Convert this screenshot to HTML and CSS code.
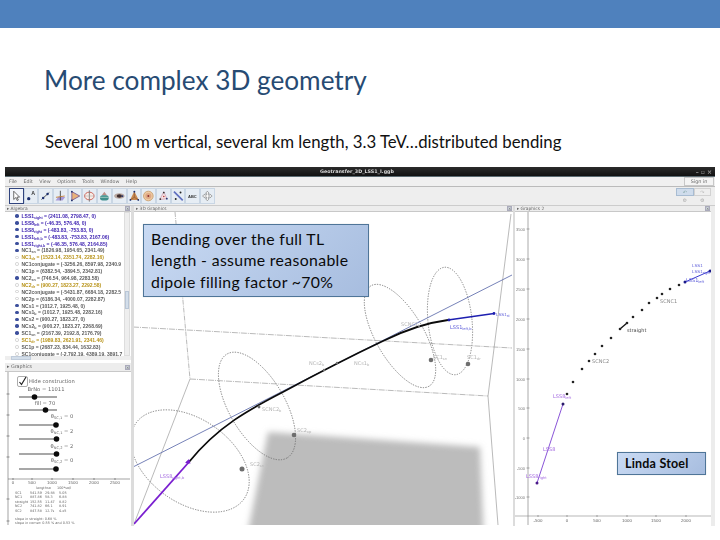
FILE: index.html
```html
<!DOCTYPE html>
<html lang="en">
<head>
<meta charset="utf-8">
<title>More complex 3D geometry</title>
<link rel="stylesheet" href="styles.css">
</head>
<body>
<div class="slide">
  <div class="band"></div>
  <h1 class="title">More complex 3D geometry</h1>
  <p class="lead">Several 100 m vertical, several km length, 3.3 TeV…distributed bending</p>

  <div class="app">
    <div class="titlebar"><span class="wintitle">Geotransfer_3D_LSS1_I.ggb</span><span class="winctl">– ▫ ×</span></div>
    <div class="menubar">
      <span>File</span><span>Edit</span><span>View</span><span>Options</span><span>Tools</span><span>Window</span><span>Help</span>
      <span class="signin">Sign in</span>
    </div>
    <div class="toolbar">
      <div class="tool tool-on"><svg viewBox="0 0 14 16"><path d="M4 2.5v9.5l2.4-2.2 1.6 3.4 1.3-.6-1.6-3.3h3z" fill="#fff" stroke="#333" stroke-width=".8"/></svg></div>
      <div class="tool"><svg viewBox="0 0 14 16"><circle cx="4" cy="11" r="1.9" fill="#1c2f6e"/><text x="7" y="7" class="ticon">A</text></svg></div>
      <div class="tool"><svg viewBox="0 0 14 16"><path d="M2.5 12L11.5 4" stroke="#444" stroke-width="1"/><circle cx="4.5" cy="10.2" r="1.4" fill="#1c2f6e"/><circle cx="9.5" cy="5.8" r="1.4" fill="#1c2f6e"/></svg></div>
      <div class="tool"><svg viewBox="0 0 14 16"><path d="M1.5 13l3-4h8l-3 4z" fill="#a79ad8"/><path d="M7 2v11" stroke="#444" stroke-width="1"/><path d="M2 9.5l10-1.5" stroke="#c07a30"/></svg></div>
      <div class="tool"><svg viewBox="0 0 14 16"><path d="M3 3l9 5-9 5z" fill="#eab27a" stroke="#7a5a90" stroke-width="1"/><circle cx="3" cy="3" r="1" fill="#1c2f6e"/><circle cx="3" cy="13" r="1" fill="#1c2f6e"/></svg></div>
      <div class="tool"><svg viewBox="0 0 14 16"><ellipse cx="7" cy="8" rx="5.4" ry="4.4" fill="#f7ece6" stroke="#c9574a"/><path d="M7 1.5v13" stroke="#777"/><path d="M1.5 8h11" stroke="#aaa" stroke-width=".6"/></svg></div>
      <div class="tool"><svg viewBox="0 0 14 16"><path d="M4 7l3-4 3 4z" fill="#bd8f88"/><rect x="2" y="7" width="10" height="6" rx="3" fill="#3f8f8c"/><path d="M2 9.5h10" stroke="#a9d2c8"/></svg></div>
      <div class="tool"><svg viewBox="0 0 14 16"><ellipse cx="7" cy="8" rx="6" ry="3.2" fill="#b9a8a0"/><ellipse cx="7" cy="8" rx="3" ry="2" fill="#3f2d2d"/><circle cx="10.5" cy="8" r="1" fill="#1c2f6e"/></svg></div>
      <div class="tool"><svg viewBox="0 0 14 16"><path d="M7 2.500L2 12.500h10z" fill="#c98a50"/><path d="M7 2.500v7L2 12.500M7 9.500l5 3" stroke="#7a4a30" stroke-width=".6" fill="none"/><circle cx="7" cy="3" r="1.100" fill="#1c2f6e"/><circle cx="2.500" cy="12.500" r="1" fill="#1c2f6e"/><circle cx="11.500" cy="12.500" r="1" fill="#1c2f6e"/></svg></div>
      <div class="tool"><svg viewBox="0 0 14 16"><circle cx="7" cy="8" r="5.500" fill="#eec9a2" stroke="#c9a070"/><circle cx="7" cy="8" r="3.500" fill="#dfa985"/><circle cx="7" cy="8" r="1.100" fill="#8c2f2f"/></svg></div>
      <div class="tool"><svg viewBox="0 0 14 16"><path d="M7.500 3L3 12l8-1z" fill="#f4e4e4" stroke="#c9879a" stroke-width=".7"/><circle cx="7.500" cy="4" r="1" fill="#333"/><circle cx="3.500" cy="11.500" r="1" fill="#333"/><circle cx="11" cy="11" r="1" fill="#1c2f6e"/><circle cx="7.500" cy="8.500" r=".9" fill="#b33"/></svg></div>
      <div class="tool"><svg viewBox="0 0 14 16"><path d="M2 3l10 10" stroke="#5f6fc0" stroke-width="2"/><circle cx="9.500" cy="4" r="1.100" fill="#222"/><circle cx="4" cy="11.500" r="1.100" fill="#222"/></svg></div>
      <div class="tool"><svg viewBox="0 0 14 16"><text x="7" y="10" class="tabc">ABC</text></svg></div>
      <div class="tool"><svg viewBox="0 0 14 16"><path d="M7 2.500l2 2.500H8v2h2V6l2.500 2-2.500 2V9H8v2h1l-2 2.500L5 11h1V9H4v1L1.500 8 4 6v1h2V5H5z" fill="#fff" stroke="#777" stroke-width=".7"/></svg></div>
      <div class="toolside">
        <div class="sidebtns"><span class="sidebtn sidebtn-on">↶</span><span class="sidebtn">↷</span></div>
        <div class="sidegears"><span>⚙</span><span>⚙</span></div>
      </div>
    </div>

    <div class="panes">
      <div class="leftcol">
        <div class="phead"><span>▸ Algebra</span><span class="pclose">×</span></div>
        <div class="algebra">
          <div class="list">
            <div class="row blue"><i class="dot"></i><span>LSS1<sub>sight</sub> = (2411.08, 2798.47, 0)</span></div>
            <div class="row blue"><i class="dot"></i><span>LSS8<sub>left</sub> = (-46.35, 576.48, 0)</span></div>
            <div class="row blue"><i class="dot"></i><span>LSS8<sub>right</sub> = (-483.83, -753.83, 0)</span></div>
            <div class="row blue"><i class="dot"></i><span>LSS1<sub>left,b</sub> = (-483.83, -753.83, 2167.06)</span></div>
            <div class="row blue"><i class="dot"></i><span>LSS1<sub>right,b</sub> = (-46.35, 576.48, 2164.85)</span></div>
            <div class="row"><i class="dot"></i><span>NC1<sub>sn</sub> = (1826.98, 1954.65, 2341.49)</span></div>
            <div class="row gold"><i class="dot dot-off"></i><span>NC1<sub>dr</sub> = (1523.14, 2351.74, 2282.16)</span></div>
            <div class="row"><i class="dot dot-off"></i><span>NC1conjugate = (-3256.26, 8597.98, 2340.9</span></div>
            <div class="row"><i class="dot dot-off"></i><span>NC1p = (6382.54, -3894.5, 2342.81)</span></div>
            <div class="row"><i class="dot"></i><span>NC2<sub>sn</sub> = (746.54, 964.98, 2283.58)</span></div>
            <div class="row gold"><i class="dot dot-off"></i><span>NC2<sub>dr</sub> = (900.27, 1823.27, 2292.58)</span></div>
            <div class="row"><i class="dot dot-off"></i><span>NC2conjugate = (-5431.87, 6684.18, 2282.5</span></div>
            <div class="row"><i class="dot dot-off"></i><span>NC2p = (6186.34, -4000.07, 2282.87)</span></div>
            <div class="row"><i class="dot"></i><span>NCs1 = (1012.7, 1925.48, 0)</span></div>
            <div class="row"><i class="dot"></i><span>NCs1<sub>b</sub> = (1012.7, 1925.48, 2282.16)</span></div>
            <div class="row"><i class="dot"></i><span>NCs2 = (900.27, 1823.27, 0)</span></div>
            <div class="row"><i class="dot"></i><span>NCs2<sub>b</sub> = (900.27, 1823.27, 2268.69)</span></div>
            <div class="row"><i class="dot"></i><span>SC1<sub>sn</sub> = (2167.39, 2192.8, 2176.79)</span></div>
            <div class="row gold"><i class="dot dot-off"></i><span>SC1<sub>dr</sub> = (1989.83, 2621.91, 2341.46)</span></div>
            <div class="row"><i class="dot dot-off"></i><span>SC1p = (2687.23, 834.44, 1632.83)</span></div>
            <div class="row"><i class="dot dot-off"></i><span>SC1conjugate = (-2,792.19, 4389.19, 3891.7</span></div>
          </div>
          <div class="vscroll"><span class="vthumb"></span></div>
        </div>
        <div class="hscroll"><span class="hthumb"></span></div>
        <div class="phead phead-low"><span>▸ Graphics</span><span class="pclose">×</span></div>
        <svg class="canvas" viewBox="5 371 126 153" width="126" height="153">
          <path d="M8 371V524M8 478H130" stroke="#666" stroke-width=".6" fill="none"/>
          <path d="M6.500 393h3M6.500 414h3M6.500 435h3M6.500 456h3M6.500 498h3M6.500 520h3M13 477v2M32 477v2M52 477v2M73 477v2M94 477v2M115 477v2" stroke="#555" stroke-width=".6"/>
          <g class="axis">
            <text x="13" y="483">0</text><text x="32" y="483">500</text><text x="52" y="483">1000</text><text x="73" y="483">1500</text><text x="94" y="483">2000</text><text x="115" y="483">2500</text>
          </g>
          <rect x="17.500" y="375.500" width="10" height="10" rx="1.500" fill="#fff" stroke="#888" stroke-width=".7"/>
          <path d="M19.500 381l2 2.500 4.500-7.500" fill="none" stroke="#222" stroke-width="1.200"/>
          <text x="29" y="382" class="lab">Hide construction</text>
          <text x="46" y="390" class="lab mid">BrNo = 11011</text>
          <text x="45" y="404" class="lab mid">fill = 70</text>
          <text x="62" y="417" class="lab mid">θ<tspan class="sm" dy="1">SC,1</tspan><tspan dy="-1"> = 0</tspan></text>
          <text x="62" y="432" class="lab mid">θ<tspan class="sm" dy="1">NC,1</tspan><tspan dy="-1"> = 2</tspan></text>
          <text x="62" y="447" class="lab mid">θ<tspan class="sm" dy="1">NC,2</tspan><tspan dy="-1"> = 2</tspan></text>
          <text x="62" y="461" class="lab mid">θ<tspan class="sm" dy="1">SC,2</tspan><tspan dy="-1"> = 0</tspan></text>
          <g stroke="#8a8a8a" stroke-width="1.500">
            <path d="M19 396H57M19 409H57M19 424H57M19 438H57M19 453H57M19 468H57"/>
          </g>
          <g fill="#0a0a0a">
            <circle cx="34.500" cy="396" r="2.800"/><circle cx="45.500" cy="409" r="2.800"/><circle cx="56" cy="424" r="2.800"/><circle cx="56.500" cy="438" r="2.800"/><circle cx="56.500" cy="453" r="2.800"/><circle cx="56" cy="468" r="2.800"/>
          </g>
          <g class="tbl">
            <text x="36" y="488">length</text><text x="47" y="488">so</text><text x="57" y="488">100*so/l</text>
            <text x="15" y="492.500">SC1</text><text x="30" y="492.500">541.59</text><text x="45" y="492.500">29.88</text><text x="59" y="492.500">5.05</text>
            <text x="15" y="497">NC1</text><text x="30" y="497">887.86</text><text x="45" y="497">58.3</text><text x="59" y="497">6.88</text>
            <text x="15" y="501.500">straight</text><text x="30" y="501.500">152.55</text><text x="45" y="501.500">11.47</text><text x="59" y="501.500">8.82</text>
            <text x="15" y="506">NC2</text><text x="30" y="506">741.82</text><text x="45" y="506">66.1</text><text x="59" y="506">8.91</text>
            <text x="15" y="510.500">SC2</text><text x="30" y="510.500">847.58</text><text x="45" y="510.500">12.7s</text><text x="59" y="510.500">4.x5</text>
            <text x="15" y="518.500">slope in straight: 0.68 %</text>
            <text x="15" y="522.500">slope in corner: 0.55 % and 0.53 %</text>
          </g>
        </svg>
      </div>

      <div class="midcol">
        <div class="phead"><span>▸ 3D Graphics</span><span class="pclose">×</span></div>
        <svg class="canvas" viewBox="134 211 379 313" width="379" height="313">
          <defs><filter id="soft" x="-10%" y="-10%" width="120%" height="120%"><feGaussianBlur stdDeviation="3"/></filter></defs>
          <polygon points="268,431 480,446 484,540 246,540" fill="#bcbcbc" filter="url(#soft)"/>
          <g fill="none" stroke="#9c9c9c" stroke-width=".7">
            <path d="M175 211L190 378" stroke-dasharray="5 1 1 1"/>
            <path d="M190 378L488 395" stroke-dasharray="6 1 1 1"/>
            <path d="M133 326L512 347" stroke-dasharray="6 1 1 1"/>
            <path d="M190 378L134 523"/>
            <path d="M511 213L488 395L498 524"/>
          </g>
          <g fill="none" stroke="#6f6f6f" stroke-width=".8" stroke-dasharray="1.300 1.300">
            <ellipse cx="190" cy="460" rx="66" ry="42" transform="rotate(35 190 460)"/>
            <ellipse cx="257" cy="405" rx="60" ry="28" transform="rotate(60 257 405)"/>
            <ellipse cx="400" cy="335" rx="58" ry="24" transform="rotate(60 400 335)"/>
            <ellipse cx="450" cy="320" rx="22" ry="54" transform="rotate(-6 450 320)"/>
          </g>
          <path d="M133 466L512 274" stroke="#6674b0" stroke-width=".9" fill="none"/>
          <path d="M189 461C218 425 250 408 283 391C320 371 345 358 383 340C405 329 425 322 448 319" stroke="#0b0b0b" stroke-width="1.800" fill="none"/>
          <path d="M134 523L189 461" stroke="#7a1fd0" stroke-width="1.800"/>
          <path d="M185 462l4-4 1.500 4.500z" fill="#7a1fd0"/>
          <circle cx="188" cy="461" r="1.600" fill="#7a1fd0"/>
          <path d="M448 319L494 312.500" stroke="#1d1fb0" stroke-width="1.600"/>
          <circle cx="449" cy="319" r="1.400" fill="#1d1fb0"/><circle cx="494" cy="312.500" r="1.400" fill="#1d1fb0"/>
          <g fill="#6e6e6e">
            <circle cx="242" cy="468" r="2.500"/><circle cx="294" cy="434" r="2.300"/><circle cx="431" cy="359" r="2.300"/><circle cx="468" cy="363" r="2.300"/>
            <circle cx="324" cy="369" r="1.200"/><circle cx="337" cy="362" r="1.200"/><circle cx="259" cy="406" r="1.400"/>
          </g>
          <g class="glab">
            <text x="250" y="465">SC2<tspan class="sm" dy="1">sn</tspan></text>
            <text x="297" y="431">SC2<tspan class="sm" dy="1">xp</tspan></text>
            <text x="262" y="410">SCNC2<tspan class="sm" dy="1">b</tspan></text>
            <text x="309" y="364">NCs2<tspan class="sm" dy="1">b</tspan></text>
            <text x="354" y="364">NCs1<tspan class="sm" dy="1">b</tspan></text>
            <text x="401" y="325">SCNC1<tspan class="sm" dy="1">b</tspan></text>
            <text x="433" y="358">SC1<tspan class="sm" dy="1">sn</tspan></text>
            <text x="467" y="358">SC1<tspan class="sm" dy="1">dr</tspan></text>
          </g>
          <text x="160" y="477" class="glab vio">LSS8<tspan class="sm" dy="1">right,b</tspan></text>
          <text x="496" y="315" class="glab ind narrow">LSS1<tspan class="sm" dy="1">st</tspan></text>
          <text x="450" y="328" class="glab ind">LSS1<tspan class="sm" dy="1">left,b</tspan></text>
        </svg>
      </div>

      <div class="rightcol">
        <div class="phead"><span>▸ Graphics 2</span><span class="pclose">×</span></div>
        <svg class="canvas" viewBox="515 211 196 313" width="196" height="313">
          <path d="M528 211V524" stroke="#aaa" stroke-width="1"/>
          <path d="M515 515H711" stroke="#888" stroke-width=".6"/>
          <g stroke="#777" stroke-width=".6">
            <path d="M526.500 228h3M526.500 258h3M526.500 288h3M526.500 318h3M526.500 348h3M526.500 378h3M526.500 407h3M526.500 437h3M526.500 467h3M526.500 496h3"/>
            <path d="M538 514v2M567 514v2M597 514v2M627 514v2M656 514v2M686 514v2"/>
          </g>
          <g class="yaxis">
            <text x="525" y="230">3500</text><text x="525" y="260">3000</text><text x="525" y="290">2500</text><text x="525" y="320">2000</text><text x="525" y="350">1500</text><text x="525" y="380">1000</text><text x="525" y="409">500</text><text x="525" y="439">0</text><text x="525" y="469">-500</text><text x="525" y="498">-1000</text>
          </g>
          <g class="axis">
            <text x="538" y="521">-500</text><text x="567" y="521">0</text><text x="597" y="521">500</text><text x="627" y="521">1000</text><text x="656" y="521">1500</text><text x="686" y="521">2000</text>
          </g>
          <path d="M537 482L563 403" stroke="#8a55d8" stroke-width="1"/>
          <path d="M685 281L710 270" stroke="#3a3ad0" stroke-width="1"/>
          <path d="M620 328L627 322" stroke="#111" stroke-width="1.300"/>
          <g fill="#222">
            <circle cx="573" cy="381" r="1.300"/><circle cx="582" cy="368" r="1.300"/><circle cx="589" cy="360" r="1.300"/><circle cx="595" cy="353" r="1.300"/><circle cx="602" cy="345" r="1.300"/><circle cx="611" cy="337" r="1.300"/><circle cx="620" cy="328" r="1.300"/><circle cx="627" cy="322" r="1.300"/><circle cx="633" cy="316" r="1.300"/><circle cx="642" cy="309" r="1.300"/><circle cx="649" cy="302" r="1.300"/><circle cx="657" cy="297" r="1.300"/><circle cx="662" cy="293" r="1.300"/><circle cx="670" cy="288" r="1.300"/><circle cx="679" cy="284" r="1.300"/><circle cx="567" cy="393" r="1.300"/>
          </g>
          <circle cx="563" cy="403" r="1.500" fill="#2a1a6a"/><circle cx="537" cy="482" r="1.500" fill="#4a1a8a"/>
          <circle cx="685" cy="281" r="1.500" fill="#1a1a8a"/><circle cx="710" cy="270" r="1.500" fill="#1a1a8a"/>
          <text x="592" y="362" class="glab gdk">SCNC2</text>
          <text x="660" y="302" class="glab gdk">SCNC1</text>
          <text x="627" y="331" class="glab dk">straight</text>
          <text x="553" y="397" class="glab vio">LSS8<tspan class="sm" dy="1">left</tspan></text>
          <text x="543" y="450" class="glab vio">LSS8</text>
          <text x="526" y="477" class="glab vio">LSS8<tspan class="sm" dy="1">right</tspan></text>
          <text x="692" y="266" class="glab ind narrow">LSS1</text>
          <text x="692" y="272" class="glab ind narrow">LSS1<tspan class="sm" dy="1">sight</tspan></text>
          <text x="686" y="281" class="glab ind">LSS1<tspan class="sm" dy="1">left</tspan></text>
        </svg>
      </div>
      <div class="rightedge"></div>
    </div>
  </div>

  <div class="callout callout-main">Bending over the full TL<br>length - assume reasonable<br>dipole filling factor ~70%</div>
  <div class="callout callout-name">Linda Stoel</div>
</div>
</body>
</html>
```

FILE: styles.css
```css
* { box-sizing: border-box; }
html, body { margin: 0; padding: 0; background: #fff; }
body { font-family: "Lato", "Liberation Sans", sans-serif; }
.slide { position: relative; width: 720px; height: 540px; overflow: hidden; background: #fff; }
.band { height: 28px; background: #4f81bd; }
.title { margin: 34px 0 0 44px; font-size: 26.200px; line-height: 36px; font-weight: 400; color: #274b73; }
.lead { margin: 34px 0 0 45px; font-size: 16.800px; line-height: 20px; color: #111; white-space: nowrap; }

.app { margin: 15px 5px 0; width: 710px; height: 359px; display: flex; flex-direction: column; background: #e9e9e9; font-family: "DejaVu Sans", sans-serif; filter: blur(.55px); }
.titlebar { height: 9px; flex: none; background: linear-gradient(#2b2b2b, #111); display: flex; align-items: center; justify-content: center; position: relative; color: #d8d8d8; font-size: 4.800px; font-weight: 700; }
.wintitle { margin-left: -6px; }
.winctl { position: absolute; right: 3px; top: 0; font-size: 6px; line-height: 9px; color: #999; }
.menubar { height: 11px; flex: none; background: #f0f0f0; border-top: 1px solid #5b6b72; border-bottom: 1px solid #bbb; display: flex; align-items: center; gap: 6.500px; padding-left: 4px; font-size: 4.800px; color: #666; }
.signin { margin-left: auto; width: 30px; height: 9px; border: 1px solid #c8c8c8; text-align: center; line-height: 7px; background: #f4f4f4; margin-right: 1px; }
.toolbar { height: 19px; flex: none; background: #eeeeee; display: flex; padding: 1px 0 0 4px; border-bottom: 1px solid #ccc; }
.tool { width: 14.700px; height: 16px; background: #e6edf4; border: 1px solid #c9d6e4; }
.tool svg { display: block; width: 100%; height: 100%; }
.tool-on { border-color: #30447e; background: #f2f5fa; }
.ticon { font-size: 6px; font-weight: 700; fill: #333; font-family: "Liberation Sans", sans-serif; }
.tabc { font-size: 4.600px; font-weight: 700; fill: #333; text-anchor: middle; font-family: "Liberation Sans", sans-serif; }
.toolside { margin-left: auto; width: 35px; margin-right: 4px; }
.sidebtns { display: flex; }
.sidebtn { flex: 1; height: 8px; border: 1px solid #d2d2d2; font-size: 5px; line-height: 6px; text-align: center; color: #bbb; background: #eee; }
.sidebtn-on { background: #cfdcec; border-color: #a8bcd2; color: #8aa; }
.sidegears { display: flex; justify-content: space-around; font-size: 5px; line-height: 8px; color: #aaa; }

.panes { flex: 1; min-height: 0; display: flex; background: #dcdcdc; }
.leftcol { width: 126px; flex: none; display: flex; flex-direction: column; background: #fff; }
.midcol { width: 379px; flex: none; margin-left: 3px; background: #fff; }
.rightcol { width: 196px; flex: none; margin-left: 2px; background: #fff; }
.rightedge { flex: 1; background: #ececec; }
.canvas { display: block; background: #fff; overflow: hidden; }
.phead { height: 6px; background: #ededed; border-bottom: 1px solid #c8c8c8; display: flex; justify-content: space-between; align-items: center; padding: 0 1px 0 2px; font-size: 4.400px; line-height: 6px; color: #666; flex: none; }
.phead-low { height: 9px; margin-top: 3px; font-size: 4.800px; }
.pclose { width: 5px; height: 5px; background: #cfd6dc; border: 1px solid #aab; font-size: 4px; line-height: 3px; text-align: center; color: #666; }

.algebra { height: 144px; flex: none; display: flex; overflow: hidden; background: #fff; }
.list { flex: 1; min-width: 0; padding-top: .5px; overflow: hidden; }
.row { height: 6.900px; display: flex; align-items: center; gap: 3px; padding-left: 10px; font-family: "Liberation Sans", sans-serif; font-size: 5px; line-height: 6px; color: #5c5c5c; white-space: nowrap; font-weight: 700; }
.row sub { font-size: 3.600px; line-height: 0; vertical-align: -1.200px; }
.blue { color: #3b1fb0; }
.gold { color: #b89318; }
.dot { width: 3.500px; height: 3.500px; border-radius: 50%; background: #3c4f9c; flex: none; }
.dot-off { background: #fff; border: .5px solid #d0d0d0; }
.vscroll { width: 6px; margin-right: 1px; flex: none; background: #eee; border: 1px solid #ddd; padding-top: 78px; }
.vthumb { display: block; height: 18px; background: #d3deea; border: 1px solid #b9c6d6; }
.hscroll { height: 4px; flex: none; background: #eee; padding-left: 6px; }
.hthumb { display: block; width: 20px; height: 4px; background: #d3deea; border: 1px solid #c0ccdb; }

.axis text { font-size: 4.400px; fill: #666; text-anchor: middle; font-family: "Liberation Sans", sans-serif; }
.yaxis text { font-size: 4px; fill: #777; text-anchor: end; font-family: "Liberation Sans", sans-serif; }
.lab { font-size: 5.200px; fill: #666; font-family: "DejaVu Sans", sans-serif; }
.mid { text-anchor: middle; }
.sm { font-size: 3.600px; }
.tbl text { font-size: 3.400px; fill: #666; font-family: "DejaVu Sans", sans-serif; }
.glab { font-size: 5px; fill: #b5b5b5; font-family: "DejaVu Sans", sans-serif; }
.narrow { font-size: 4.400px; font-family: "Liberation Sans", sans-serif; }
.vio { fill: #a46be0; }
.ind { fill: #5a5ad8; }
.dk { fill: #444; }
.gdk { fill: #888; }

.callout { position: absolute; border: 1px solid #4f7598; color: #0a0a0a; box-shadow: 0 0 1px rgba(0,0,0,.2); }
.callout-main { left: 143px; top: 224px; width: 226px; height: 73px; padding: 2.500px 0 0 7px; font-size: 15.800px; line-height: 21.500px; letter-spacing: .35px; white-space: nowrap; background: linear-gradient(135deg, #c9daf3, #a7bddf); }
.callout-name { left: 617px; top: 452px; width: 89px; height: 23px; padding-left: 7px; font-size: 12.500px; line-height: 21px; font-weight: 700; letter-spacing: .2px; background: linear-gradient(135deg, #c9daf3, #a7bddf); }
```
